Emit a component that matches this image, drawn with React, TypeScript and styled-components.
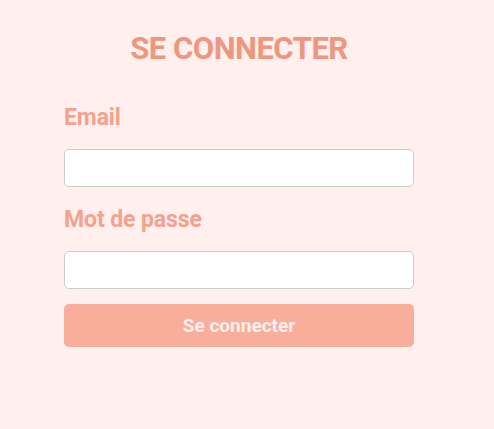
import React from "react";
import styled, { createGlobalStyle } from "styled-components";

const Global = createGlobalStyle`
  html, body { margin: 0; padding: 0; background: #fff0ed; }
  body { font-family: Roboto, "Liberation Sans", sans-serif; }
`;

const Page = styled.div`
  display: flex;
  justify-content: flex-start;
  padding: 30px 0 0 64px;
`;

const Form = styled.form`
  width: 350px;
  display: flex;
  flex-direction: column;
  gap: 20px;
`;

const Title = styled.h1`
  margin: 0 0 17px;
  font-size: 31px;
  line-height: 38px;
  font-weight: 700;
  text-align: center;
  color: #ef9681;
  letter-spacing: -0.5px;
`;

const Field = styled.div`
  display: flex;
  flex-direction: column;
`;

const Label = styled.label`
  font-size: 23px;
  line-height: 26px;
  font-weight: 700;
  color: #f8a08e;
  margin-bottom: 18px;
  letter-spacing: -0.1px;
`;

const Input = styled.input`
  box-sizing: border-box;
  width: 350px;
  height: 38px;
  border: 1px solid #cccccc;
  border-radius: 5px;
  background: #ffffff;
`;

const Button = styled.button`
  box-sizing: border-box;
  width: 350px;
  height: 43px;
  border: none;
  border-radius: 5px;
  background: #f9ae9c;
  color: #fff0ed;
  font-family: Roboto, "Liberation Sans", sans-serif;
  font-size: 19px;
  font-weight: 700;
  margin-top: -5px;
`;

export default function App() {
  return (
    <>
      <Global />
      <Page>
        <Form onSubmit={(e) => e.preventDefault()}>
          <Title>SE CONNECTER</Title>
          <Field>
            <Label>Email</Label>
            <Input type="email" />
          </Field>
          <Field>
            <Label>Mot de passe</Label>
            <Input type="password" />
          </Field>
          <Button type="submit">Se connecter</Button>
        </Form>
      </Page>
    </>
  );
}
